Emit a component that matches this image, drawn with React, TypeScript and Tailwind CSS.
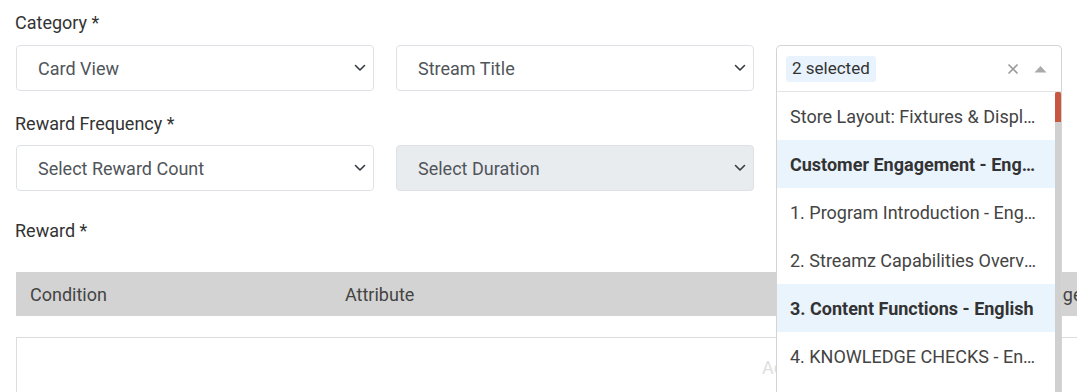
import { useState } from 'react';

const font = { fontFamily: 'Roboto, "Liberation Sans", sans-serif' };

function Chevron() {
    return (
        <svg width="12" height="8" viewBox="0 0 12 8" className="shrink-0">
            <path d="M1.5 1.5 L6 6 L10.5 1.5" fill="none" stroke="#343a40" strokeWidth="1.6" strokeLinecap="round" strokeLinejoin="round" />
        </svg>
    );
}

function Select({ label, disabled }: { label: string; disabled?: boolean }) {
    return (
        <div
            className={`h-[46px] rounded-[4px] border border-[#dee2e6] flex items-center justify-between pl-[21px] pr-[7px] text-[18px] text-[#50555a] ${disabled ? 'bg-[#e9ecef]' : 'bg-white'}`}
        >
            <span>{label}</span>
            <Chevron />
        </div>
    );
}

const options = [
    { text: 'Store Layout: Fixtures & Displays - English', active: false },
    { text: 'Customer Engagement - English', active: true },
    { text: '1. Program Introduction - English', active: false },
    { text: '2. Streamz Capabilities Overview - English', active: false },
    { text: '3. Content Functions - English', active: true },
    { text: '4. KNOWLEDGE CHECKS - English', active: false },
    { text: '5. Reporting & Analytics - English', active: false },
];

function MultiSelect() {
    const [open] = useState(true);
    return (
        <div className="relative">
            <div className="h-[47px] rounded-t-[5px] border border-[#d4d4d4] border-b-[#e4e4e4] bg-white flex items-center pl-[9px] pr-[14px]">
                <span className="h-[26px] px-[6px] rounded-[3px] bg-[#e9f3fe] text-[17px] text-[#333] flex items-center">2 selected</span>
                <div className="ml-auto flex items-center gap-[15px]">
                    <svg width="12" height="12" viewBox="0 0 12 12">
                        <path d="M1.5 1.5 L10.5 10.5 M10.5 1.5 L1.5 10.5" stroke="#9a9a9a" strokeWidth="1.6" />
                    </svg>
                    <svg width="13" height="8" viewBox="0 0 13 8">
                        <path d="M0.5 7.5 L6.5 1 L12.5 7.5 Z" fill="#aaaaaa" />
                    </svg>
                </div>
            </div>
            {open && (
                <div className="absolute left-0 right-0 top-[47px] h-[320px] z-10 bg-white border-x border-[#d4d4d4] flex">
                    <ul className="flex-1 min-w-0">
                        {options.map((o) => (
                            <li
                                key={o.text}
                                className={`h-12 flex items-center pl-[13px] pr-[18px] text-[18px] ${o.active ? 'bg-[#eaf4fd] font-bold text-[#333]' : 'text-[#444]'}`}
                            >
                                <span className="truncate">{o.text}</span>
                            </li>
                        ))}
                    </ul>
                    <div className="w-[6px] bg-[#d0d0d0]">
                        <div className="h-[30px] bg-[#c9573f] rounded-t-[2px]" />
                    </div>
                </div>
            )}
        </div>
    );
}

export default function App() {
    return (
        <div className="relative w-[1077px] h-[392px] overflow-hidden bg-white" style={font}>
            <div className="pl-4 pt-[11px] w-[1200px]">
                <div className="h-6 leading-6 text-[18px] text-[#333] -ml-px">Category *</div>
                <div className="mt-[10px] grid grid-cols-[358px_358px_286px] gap-x-[22px]">
                    <Select label="Card View" />
                    <Select label="Stream Title" />
                    <MultiSelect />
                </div>

                <div className="mt-[20px] h-6 leading-6 text-[18px] text-[#333] -ml-px">Reward Frequency *</div>
                <div className="mt-[9px] grid grid-cols-[358px_358px] gap-x-[22px]">
                    <Select label="Select Reward Count" />
                    <Select label="Select Duration" disabled />
                </div>

                <div className="mt-[28px] h-6 leading-6 text-[18px] text-[#333] -ml-px">Reward *</div>

                <div className="mt-[29px] h-[44px] bg-[#d3d3d3] flex items-center text-[18px] text-[#444]">
                    <span className="w-[329px] pl-[14px]">Condition</span>
                    <span className="w-[687px]">Attribute</span>
                    <span>Range</span>
                </div>

                <div className="mt-[21px] h-[80px] border border-[#dcdcdc] pl-[745px] pt-[18px]">
                    <span className="block h-6 leading-6 text-[18px] text-[#dedede]">Add</span>
                </div>
            </div>
        </div>
    );
}
